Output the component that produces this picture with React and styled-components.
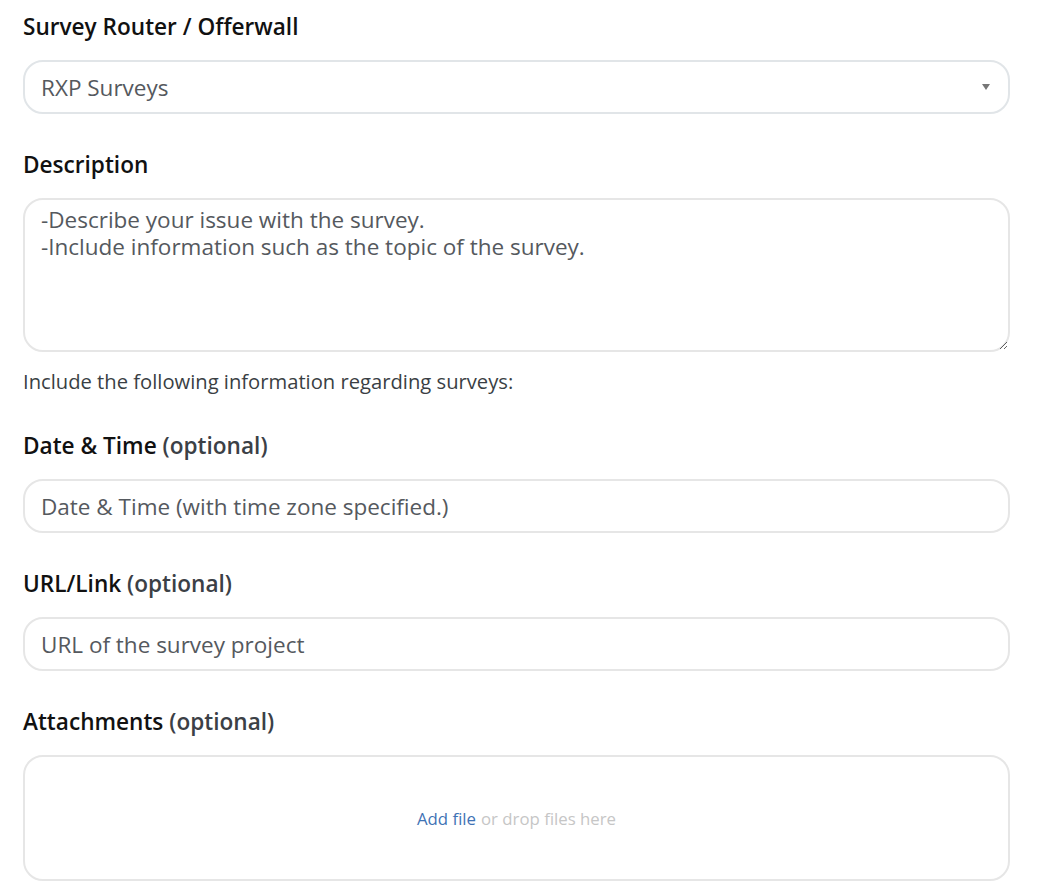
import React from "react";
import styled, { createGlobalStyle } from "styled-components";

const Global = createGlobalStyle`
  html, body { margin: 0; padding: 0; background: #fff; }
  body { font-family: "Open Sans", "Noto Sans", sans-serif; }
  * { box-sizing: border-box; }
`;

const Form = styled.form`
  width: 987px;
  margin-left: 23px;
  padding-top: 12px;
  display: flex;
  flex-direction: column;
`;

const Field = styled.div`
  display: flex;
  flex-direction: column;
  margin-bottom: ${(p) => p.$mb ?? 36}px;
`;

const Label = styled.label`
  font-size: 22.6px;
  line-height: 30px;
  font-weight: 600;
  color: #111;
  margin-bottom: 18px;
`;

const Optional = styled.span`
  font-weight: 600;
  color: #3b4046;
`;

const boxBase = `
  width: 100%;
  border: 2px solid #e6e6e6;
  border-radius: 20px;
  background: #fff;
  font-family: "Open Sans", "Noto Sans", sans-serif;
  font-size: 22.5px;
  color: #55595e;
  padding: 0 16px;
`;

const Select = styled.div`
  ${boxBase}
  border-color: #e1e5e8;
  height: 54px;
  display: flex;
  align-items: center;
  justify-content: space-between;
  padding-right: 18px;
`;

const Caret = styled.span`
  width: 0;
  height: 0;
  border-left: 4px solid transparent;
  border-right: 4px solid transparent;
  border-top: 6px solid #777;
`;

const TextArea = styled.textarea`
  ${boxBase}
  height: 154px;
  padding: 6px 16px;
  line-height: 27px;
  resize: vertical;
  outline: none;
  &::placeholder { color: #55595e; opacity: 1; }
`;

const Input = styled.input`
  ${boxBase}
  height: 54px;
  outline: none;
  &::placeholder { color: #55595e; opacity: 1; }
`;

const Hint = styled.p`
  margin: 16px 0 0;
  font-size: 20.2px;
  line-height: 26px;
  color: #3a3f44;
`;

const Dropzone = styled.div`
  ${boxBase}
  height: 126px;
  display: flex;
  align-items: center;
  justify-content: center;
  font-size: 16.8px;
  color: #c6c6c6;
  gap: 5px;
`;

const AddFile = styled.a`
  color: #3f73b5;
  text-decoration: none;
`;

export default function App() {
  return (
    <>
      <Global />
      <Form>
        <Field>
          <Label>Survey Router / Offerwall</Label>
          <Select>
            <span>RXP Surveys</span>
            <Caret />
          </Select>
        </Field>
        <Field $mb={37}>
          <Label>Description</Label>
          <TextArea
            placeholder={"-Describe your issue with the survey.\n-Include information such as the topic of the survey."}
          />
          <Hint>Include the following information regarding surveys:</Hint>
        </Field>
        <Field>
          <Label>
            Date &amp; Time <Optional>(optional)</Optional>
          </Label>
          <Input placeholder="Date & Time (with time zone specified.)" />
        </Field>
        <Field>
          <Label>
            URL/Link <Optional>(optional)</Optional>
          </Label>
          <Input placeholder="URL of the survey project" />
        </Field>
        <Field $mb={0}>
          <Label>
            Attachments <Optional>(optional)</Optional>
          </Label>
          <Dropzone>
            <AddFile href="#">Add file</AddFile>
            <span>or drop files here</span>
          </Dropzone>
        </Field>
      </Form>
    </>
  );
}
